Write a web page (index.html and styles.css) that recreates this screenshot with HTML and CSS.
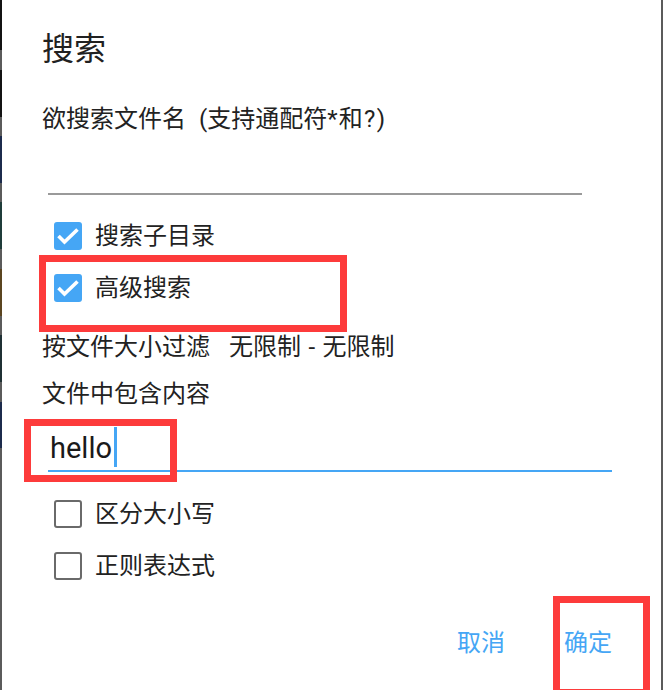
FILE: index.html
```html
<!DOCTYPE html>
<html lang="zh">
<head>
<meta charset="utf-8">
<link rel="stylesheet" href="styles.css">
</head>
<body>
<div class="screen">
  <div class="strip-left">
    <div class="seg dark" style="height:50px"></div>
    <div class="seg gray" style="height:20px"></div>
    <div class="seg dark" style="height:47px"></div>
    <div class="seg gray" style="height:19px"></div>
    <div class="seg navy" style="height:47px"></div>
    <div class="seg gray" style="height:19px"></div>
    <div class="seg teal" style="height:47px"></div>
    <div class="seg gray" style="height:20px"></div>
    <div class="seg brown" style="height:47px"></div>
    <div class="seg gray" style="height:19px"></div>
    <div class="seg slate" style="height:47px"></div>
    <div class="seg gray" style="height:20px"></div>
    <div class="seg navy" style="height:46px"></div>
    <div class="seg gray fill"></div>
  </div>

  <div class="dialog">
    <div class="title">搜索</div>
    <div class="text subtitle">欲搜索文件名 (支持通配符<span class="sym">*和?)</span></div>
    <div class="edit edit-name"></div>

    <div class="check-row first">
      <span class="box checked">
        <svg viewBox="0 0 28 28" width="28" height="28"><polyline points="4.5,14 10.5,20 23.5,7.5" fill="none" stroke="#fff" stroke-width="3.6"/></svg>
      </span>
      <span class="text">搜索子目录</span>
    </div>
    <div class="check-row">
      <span class="box checked">
        <svg viewBox="0 0 28 28" width="28" height="28"><polyline points="4.5,14 10.5,20 23.5,7.5" fill="none" stroke="#fff" stroke-width="3.6"/></svg>
      </span>
      <span class="text">高级搜索</span>
    </div>

    <div class="text filter"><span>按文件大小过滤</span><span class="range">无限制 - 无限制</span></div>
    <div class="text content-label">文件中包含内容</div>
    <div class="edit edit-content"><span class="value">hello</span><span class="cursor"></span></div>

    <div class="check-row third">
      <span class="box"></span>
      <span class="text">区分大小写</span>
    </div>
    <div class="check-row">
      <span class="box"></span>
      <span class="text">正则表达式</span>
    </div>

    <div class="actions">
      <span class="btn">取消</span>
      <span class="btn">确定</span>
    </div>
  </div>

  <div class="strip-right"></div>

  <div class="mark mark-adv"></div>
  <div class="mark mark-hello"></div>
  <div class="mark mark-ok"></div>
</div>
</body>
</html>
```

FILE: styles.css
```css
html, body {
  margin: 0;
  padding: 0;
  background: #fff;
}

.screen {
  position: relative;
  width: 663px;
  height: 690px;
  overflow: hidden;
  display: flex;
  font-family: Roboto, "Noto Sans CJK SC", sans-serif;
  color: #222;
}

.strip-left {
  width: 3px;
  display: flex;
  flex-direction: column;
}
.seg { flex: none; }
.seg.fill { flex: 1; }
.dark { background: #131313; }
.gray { background: #5b5b5b; }
.navy { background: #1c2b4c; }
.teal { background: #1f3c3a; }
.brown { background: #5b4520; }
.slate { background: #1f3034; }

.strip-right {
  width: 3px;
  background: #5b5b5b;
}

.dialog {
  flex: 1;
  background: #fff;
  padding-left: 40px;
  padding-right: 49px;
  display: flex;
  flex-direction: column;
}

.title {
  margin-top: 29px;
  height: 40px;
  font-size: 32px;
  line-height: 40px;
  color: #212121;
}

.text {
  font-size: 24px;
  line-height: 32px;
}

.subtitle {
  margin-top: 34px;
  word-spacing: 7px;
}
.subtitle .sym {
  letter-spacing: 1.3px;
}

.edit-name {
  margin-left: 6px;
  width: 534px;
  height: 58px;
  border-bottom: 2px solid #9a9a9a;
}

.check-row {
  height: 52px;
  display: flex;
  align-items: center;
  padding-left: 12px;
}
.check-row.first { margin-top: 15px; }
.check-row.third { margin-top: 16px; }

.box {
  width: 28px;
  height: 28px;
  box-sizing: border-box;
  border: 2.5px solid #6a6a6a;
  border-radius: 3px;
  margin-right: 13px;
  flex: none;
}
.box.checked {
  border: none;
  background: #45a6f5;
}
.box svg { display: block; }

.filter {
  margin-top: 17px;
  display: flex;
}
.filter .range {
  margin-left: 19px;
  word-spacing: 1.5px;
}
.content-label {
  margin-top: 15px;
}

.edit-content {
  margin-left: 6px;
  width: 562px;
  padding: 20px 0 4px 2px;
  height: 36px;
  line-height: 36px;
  font-size: 29px;
  color: #1a1a1a;
  border-bottom: 2.5px solid #45a6f5;
}
.cursor {
  display: inline-block;
  width: 2.5px;
  height: 40px;
  margin-top: -4px;
  margin-left: 2px;
  vertical-align: -9px;
  background: #45a6f5;
}

.actions {
  margin-top: 27px;
  height: 48px;
  display: flex;
  justify-content: flex-end;
  align-items: center;
  gap: 59px;
}
.btn {
  font-size: 24px;
  line-height: 32px;
  color: #45a6f5;
}

.mark {
  position: absolute;
  border: 7px solid #fd3b3b;
  box-sizing: border-box;
}
.mark-adv {
  left: 39px;
  top: 255px;
  width: 308px;
  height: 77px;
}
.mark-hello {
  left: 24px;
  top: 419px;
  width: 153px;
  height: 63px;
}
.mark-ok {
  left: 553px;
  top: 596px;
  width: 97px;
  height: 100px;
}
```
